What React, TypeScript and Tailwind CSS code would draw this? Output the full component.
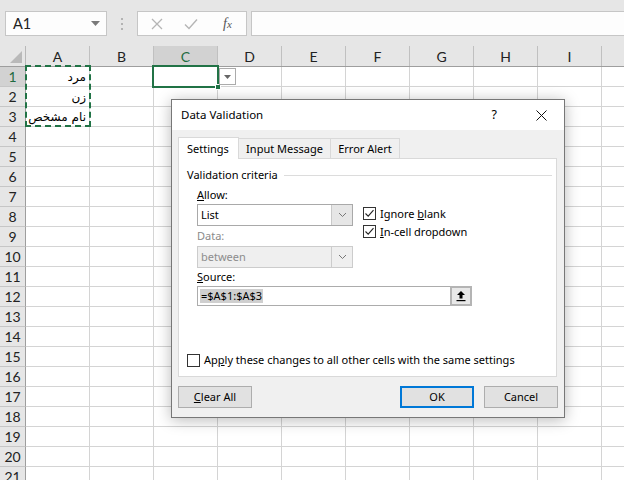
import React from 'react';

const cols = ['A', 'B', 'C', 'D', 'E', 'F', 'G', 'H', 'I', 'J'];
const rows = Array.from({ length: 21 }, (_, i) => i + 1);
const cellText: Record<number, string> = { 1: 'مرد', 2: 'زن', 3: 'نام مشخص' };

const Check = () => (
    <svg width="11" height="11" viewBox="0 0 11 11" fill="none">
        <path d="M1.5 5.5 L4.2 8.2 L9.5 2.2" stroke="#222" strokeWidth="1.1" />
    </svg>
);

const Box = ({ checked }: { checked: boolean }) => (
    <div className="w-[13px] h-[13px] border border-[#333] bg-white flex items-center justify-center shrink-0">
        {checked && <Check />}
    </div>
);

const Chevron = () => (
    <svg width="9" height="6" viewBox="0 0 9 6" fill="none">
        <path d="M1 1 L4.5 4.5 L8 1" stroke="#777" strokeWidth="1" />
    </svg>
);

const Btn = ({ children, primary }: { children: React.ReactNode; primary?: boolean }) => (
    <div
        className={`w-[74px] h-[22px] flex items-center justify-center bg-[#e1e1e1] ${primary ? 'border-2 border-[#0078d7]' : 'border border-[#adadad]'}`}
    >
        {children}
    </div>
);

const Dialog = () => (
    <div className="absolute left-[171px] top-[99px] w-[394px] h-[319px] border border-[#777] bg-[#f0f0f0] shadow-[0_2px_14px_rgba(0,0,0,0.28)] flex flex-col text-[11px] leading-[14px] text-black font-['Noto_Sans',sans-serif]">
        <div className="h-[30px] bg-white flex items-center pl-[9px] shrink-0">
            <span className="text-[11.5px]">Data Validation</span>
            <span className="ml-auto mr-[39px] text-[12.5px]">?</span>
            <svg className="mr-[17px]" width="11" height="11" viewBox="0 0 11 11">
                <path d="M0.5 0.5 L10.5 10.5 M10.5 0.5 L0.5 10.5" stroke="#111" strokeWidth="1" />
            </svg>
        </div>

        <div className="px-[6px] pt-[7px] flex flex-col">
            <div className="flex items-end h-[21px]">
                <div className="w-[61px] h-[22px] bg-white border border-b-0 border-[#d9d9d9] flex items-center pl-[8px] relative z-10 -mb-px">
                    Settings
                </div>
                <div className="w-[92px] h-[20px] border border-l-0 border-b-0 border-[#d9d9d9] flex items-center justify-center">
                    Input Message
                </div>
                <div className="w-[69px] h-[20px] border border-l-0 border-b-0 border-[#d9d9d9] flex items-center justify-center">
                    Error Alert
                </div>
            </div>

            <div className="w-[379px] h-[219px] bg-white border border-[#d9d9d9] flex flex-col pl-[8px]">
                <div className="flex items-center mt-[8px] h-[16px]">
                    <span>Validation criteria</span>
                    <div className="flex-1 h-px bg-[#dcdcdc] ml-[6px] mr-[4px]" />
                </div>

                <div className="pl-[10px] flex flex-col">
                    <div className="mt-[5px] h-[14px] flex items-center">
                        <span><span className="underline">A</span>llow:</span>
                    </div>
                    <div className="flex mt-[2px] h-[22px] items-start">
                        <div className="w-[156px] h-[22px] border border-[#a9a9a9] bg-white flex">
                            <div className="flex-1 flex items-center pl-[3px]">List</div>
                            <div className="w-[21px] bg-[#e6e6e6] border-l border-[#c9c9c9] flex items-center justify-center">
                                <Chevron />
                            </div>
                        </div>
                        <div className="flex flex-col ml-[10px] mt-[3px] gap-[5px]">
                            <div className="flex items-center gap-[4px] h-[13px]">
                                <Box checked />
                                <span>Ignore <span className="underline">b</span>lank</span>
                            </div>
                            <div className="flex items-center gap-[4px] h-[13px]">
                                <Box checked />
                                <span><span className="underline">I</span>n-cell dropdown</span>
                            </div>
                        </div>
                    </div>

                    <div className="mt-[3px] h-[14px] flex items-center text-[#8a8a8a]">Data:</div>
                    <div className="mt-[3px] w-[156px] h-[22px] border border-[#cccccc] bg-[#efefef] flex">
                        <div className="flex-1 flex items-center pl-[3px] text-[#8d8d8d]">between</div>
                        <div className="w-[21px] border-l border-[#cccccc] flex items-center justify-center">
                            <Chevron />
                        </div>
                    </div>

                    <div className="mt-[2px] h-[14px] flex items-center">
                        <span><span className="underline">S</span>ource:</span>
                    </div>
                    <div className="mt-[2px] w-[275px] h-[20px] border border-[#acacac] bg-white flex">
                        <div className="flex-1 flex items-center pl-[2px]">
                            <span className="bg-[#cfcfcf] px-[1px]">=$A$1:$A$3</span>
                        </div>
                        <div className="w-[22px] border-2 border-[#b4b4b4] -my-px -mr-px bg-[#e8e8e8] flex items-center justify-center">
                            <svg width="10" height="12" viewBox="0 0 10 12">
                                <path d="M5 1 L9 5 L6.5 5 L6.5 8.5 L3.5 8.5 L3.5 5 L1 5 Z" fill="#000" />
                                <rect x="0.5" y="10" width="9" height="1.2" fill="#000" />
                            </svg>
                        </div>
                    </div>
                </div>

                <div className="mt-auto mb-[9px] flex items-center gap-[4px]">
                    <Box checked={false} />
                    <span>Ap<span className="underline">p</span>ly these changes to all other cells with the same settings</span>
                </div>
            </div>

            <div className="flex mt-[9px]">
                <Btn><span><span className="underline">C</span>lear All</span></Btn>
                <div className="ml-auto mr-[10px]">
                    <Btn primary>OK</Btn>
                </div>
                <Btn>Cancel</Btn>
            </div>
        </div>
    </div>
);

export default function App() {
    return (
        <div className="relative w-[624px] h-[480px] overflow-hidden bg-white font-['Lato',sans-serif] text-[14px] text-[#222]">
            {/* formula bar */}
            <div className="h-[46px] bg-[#e6e6e6] flex items-start pt-[11px]">
                <div className="ml-[5px] w-[102px] h-[25px] bg-[#fdfdfd] border border-[#c6c6c6] flex items-center pl-[7px] pr-[6px]">
                    <span className="text-[14.5px]">A1</span>
                    <svg className="ml-auto" width="9" height="5" viewBox="0 0 9 5">
                        <path d="M0 0 L9 0 L4.5 5 Z" fill="#7a7a7a" />
                    </svg>
                </div>
                <div className="w-[30px] h-[25px] flex flex-col items-center justify-center gap-[3px]">
                    <div className="w-[2px] h-[2px] bg-[#b3b3b3]" />
                    <div className="w-[2px] h-[2px] bg-[#b3b3b3]" />
                    <div className="w-[2px] h-[2px] bg-[#b3b3b3]" />
                </div>
                <div className="w-[110px] h-[25px] bg-[#fdfdfd] border border-[#c6c6c6] flex items-center">
                    <svg className="ml-[13px]" width="12" height="12" viewBox="0 0 12 12">
                        <path d="M1 1 L11 11 M11 1 L1 11" stroke="#b5b5b5" strokeWidth="1.3" />
                    </svg>
                    <svg className="ml-[21px]" width="14" height="12" viewBox="0 0 14 12">
                        <path d="M1 6.5 L5 10.5 L13 1.5" stroke="#b5b5b5" strokeWidth="1.4" fill="none" />
                    </svg>
                    <span className="ml-[25px] italic font-['Liberation_Serif',serif] text-[14px] text-[#555]">
                        f<span className="text-[11px]">x</span>
                    </span>
                </div>
                <div className="ml-[4px] flex-1 h-[25px] bg-[#fdfdfd] border border-r-0 border-[#c6c6c6]" />
            </div>

            {/* column headers */}
            <div className="flex h-[21px] bg-[#e6e6e6] border-b border-[#9e9e9e]">
                <div className="w-[26px] shrink-0 border-r border-[#b8b8b8] relative">
                    <svg className="absolute right-[3px] bottom-[3px]" width="12" height="12" viewBox="0 0 12 12">
                        <path d="M12 0 L12 12 L0 12 Z" fill="#b9b9b9" />
                    </svg>
                </div>
                {cols.map((c) => (
                    <div
                        key={c}
                        className={`w-[64px] shrink-0 border-r border-[#c0c0c0] flex items-center justify-center ${c === 'C' ? 'bg-[#d2d2d2] text-[#1e6b41]' : ''}`}
                    >
                        {c === 'J' ? null : c}
                    </div>
                ))}
            </div>

            {/* rows */}
            {rows.map((r) => (
                <div key={r} className="flex h-[20px]">
                    <div
                        className={`w-[26px] shrink-0 border-r border-b border-r-[#9e9e9e] border-b-[#c6c6c6] flex items-center justify-center ${r === 1 ? 'bg-[#d2d2d2] text-[#1e6b41]' : 'bg-[#e6e6e6]'}`}
                    >
                        {r}
                    </div>
                    {cols.map((c) => (
                        <div
                            key={c}
                            className="w-[64px] shrink-0 border-r border-b border-[#d4d4d4] flex items-end justify-end pr-[3px] pb-[1px] whitespace-nowrap font-['DejaVu_Sans',sans-serif] text-[12px] leading-[16px] text-black"
                        >
                            {c === 'A' ? cellText[r] : null}
                        </div>
                    ))}
                </div>
            ))}

            {/* copy marquee around A1:A3 */}
            <div className="absolute left-[25px] top-[65px] w-[66px] h-[62px] border-2 border-dashed border-[#217346]" />

            {/* active cell C1 */}
            <div className="absolute left-[152px] top-[65px] w-[67px] h-[23px] border-2 border-[#217346]" />
            <div className="absolute left-[215px] top-[84px] w-[6px] h-[6px] bg-[#217346] border border-white" />
            <div className="absolute left-[219px] top-[68px] w-[17px] h-[17px] bg-white border border-[#ababab] flex items-center justify-center">
                <svg width="7" height="4" viewBox="0 0 7 4">
                    <path d="M0 0 L7 0 L3.5 4 Z" fill="#666" />
                </svg>
            </div>

            <Dialog />
        </div>
    );
}
